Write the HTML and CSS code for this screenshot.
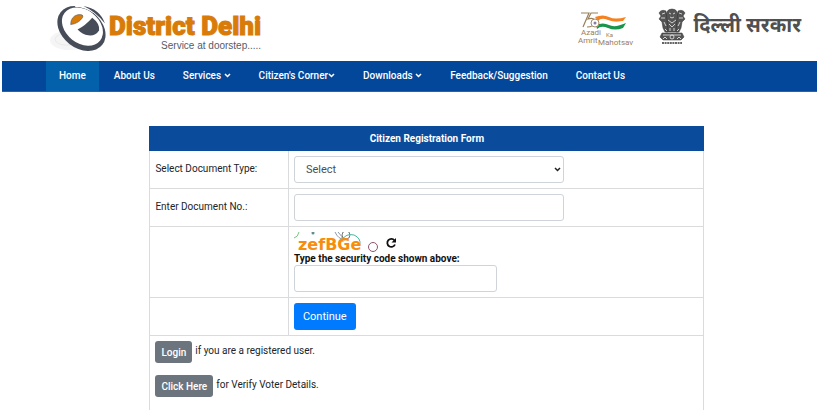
FILE: index.html
```html
<!DOCTYPE html>
<html lang="en">
<head>
<meta charset="utf-8">
<meta name="viewport" content="width=device-width, initial-scale=1">
<title>e-District Delhi - Citizen Registration Form</title>
<link rel="stylesheet" href="styles.css">
</head>
<body>
<header class="site-header">
  <div class="brand">
    <svg class="brand-mark" viewBox="0 0 60 50" aria-hidden="true">
      <ellipse cx="20" cy="37" rx="20" ry="10" fill="#f5f5f5"/>
      <ellipse cx="17" cy="36" rx="12" ry="6" fill="none" stroke="#e8e8e8"/>
      <ellipse cx="32" cy="25" rx="27" ry="20" transform="rotate(38 32 25)" fill="#464c58"/>
      <ellipse cx="33" cy="23" rx="23" ry="17" transform="rotate(38 33 23)" fill="#fff"/>
      <path d="M28 0Q39 0 47 8L44 9Q36 3 25 3Z" fill="#fff"/>
      <path d="M34 2Q51 5 56 20Q47 8 34 2Z" fill="#464c58"/>
      <path d="M28 26Q36 22 43 14Q51 20 50 27Q46 33 39 32Q33 31 28 26Z" fill="#464c58"/>
      <path d="M21 21Q21 13 28 11Q35 10 33 14Q29 20 21 21Z" fill="#d87b08" stroke="#555" stroke-width=".6"/>
    </svg>
    <div class="brand-text">
      <span class="brand-name">District Delhi</span>
      <span class="brand-tagline">Service at doorstep.....</span>
    </div>
  </div>
  <div class="partners">
    <svg class="azadi" viewBox="0 0 62 40" role="img" aria-label="75 Azadi Ka Amrit Mahotsav">
      <g transform="translate(0 3)">
        <g fill="none" stroke="#99805b" stroke-width="1.2">
          <path d="M3 2H11L5 16"/>
          <path d="M20 2H13L10 8Q17 6 17 11Q16 16 9 16"/>
        </g>
        <path d="M17 6Q25 3 31 6T48 6L45 10Q37 12 30 9T20 10Z" fill="#f58220"/>
        <path d="M20 10Q26 8 31 10T45 10L48 12Q39 16 31 13T20 14Z" fill="#fff"/>
        <path d="M18 14Q25 11 31 14T48 12L45 17Q37 20 30 17T19 18Z" fill="#16954b"/>
        <circle cx="17" cy="12" r="4" fill="#fff" stroke="#a48b69"/>
        <circle cx="17" cy="12" r="1.5" fill="#8b7da0"/>
      </g>
      <g class="azadi-text">
        <text x="3" y="27">Azadi</text>
        <text class="azadi-small" x="28" y="29">Ka</text>
        <text x="0" y="35">Amrit</text>
        <text x="20" y="37">Mahotsav</text>
      </g>
    </svg>
    <svg class="emblem" viewBox="0 0 28 38" aria-hidden="true">
      <g fill="#555" stroke="#333" stroke-width=".5">
        <path d="M9 4Q10 1 14 1Q18 1 19 4L21 8L19 13L20 24H8L9 13L7 8Z"/>
        <path d="M8 3Q3 1 1 5L3 8L1 11L4 14L5 20L7 24H10L9 12Z"/>
        <path d="M20 3Q25 1 27 5L25 8L27 11L24 14L23 20L21 24H18L19 12Z"/>
        <path d="M4 25H24L26 29L23 32H5L2 29Z"/>
      </g>
      <g fill="none" stroke="#eee" stroke-width=".8">
        <path d="M11 5L13 6M15 6L17 5M12 9Q14 11 16 9M10 12L14 15L18 12M11 16L14 19L17 16M12 20V23M16 20V23M4 6L7 5M3 10L7 10M6 14L8 18M24 6L21 5M25 10L21 10M22 14L20 18M7 21L9 23M21 21L19 23"/>
        <path d="M5 27H23"/>
        <circle cx="14" cy="29" r="2"/>
        <path d="M5 31L7 29L9 31M19 31L21 29L23 31"/>
      </g>
      <path d="M4 35H24" stroke="#333" stroke-width="1.5" stroke-dasharray="2 .6"/>
    </svg>
    <span class="government" lang="hi">दिल्ली सरकार</span>
  </div>
</header>

<nav class="main-nav" aria-label="Main">
  <a class="active" href="#">Home</a>
  <a href="#">About Us</a>
  <a href="#">Services <svg class="chevron" viewBox="0 0 7 5" aria-hidden="true"><path d="M1 1L3.500 3.500L6 1"/></svg></a>
  <a href="#">Citizen's Corner<svg class="chevron" viewBox="0 0 7 5" aria-hidden="true"><path d="M1 1L3.500 3.500L6 1"/></svg></a>
  <a href="#">Downloads <svg class="chevron" viewBox="0 0 7 5" aria-hidden="true"><path d="M1 1L3.500 3.500L6 1"/></svg></a>
  <a href="#">Feedback/Suggestion</a>
  <a href="#">Contact Us</a>
</nav>

<main>
  <form>
    <table class="registration">
      <thead>
        <tr><th colspan="2">Citizen Registration Form</th></tr>
      </thead>
      <tbody>
        <tr>
          <td class="label-cell"><label for="doc-type">Select Document Type:</label></td>
          <td>
            <div class="select-wrap">
              <select id="doc-type" class="control"><option>Select</option></select>
              <svg class="select-arrow" viewBox="0 0 7 5" aria-hidden="true"><path d="M1 1L3.500 3.500L6 1"/></svg>
            </div>
          </td>
        </tr>
        <tr>
          <td class="label-cell"><label for="doc-no">Enter Document No.:</label></td>
          <td><input id="doc-no" class="control" type="text"></td>
        </tr>
        <tr>
          <td></td>
          <td>
            <div class="captcha">
              <svg class="captcha-image" viewBox="0 0 86 21" role="img" aria-label="Security code">
                <g fill="none">
                  <path d="M0 6Q4 5 5 0" stroke="#7bc47f"/>
                  <path d="M41 0Q44 7 51 8M44 0Q49 4 49 10" stroke="#8a9aa8"/>
                  <ellipse cx="52" cy="3" rx="4" ry="4" stroke="#777"/>
                  <path d="M48 8Q52 1 60 3Q67 6 66 13" stroke="#45b8a4"/>
                </g>
                <circle cx="19" cy="1" r="1.5" fill="#638b91"/>
                <text class="captcha-code" x="4" y="18">zefBGe</text>
                <circle cx="79" cy="15" r="4.500" fill="none" stroke="#8c5570"/>
              </svg>
              <button class="refresh" type="button" aria-label="Refresh security code">
                <svg viewBox="0 0 12 12" aria-hidden="true"><path d="M9.500 3.500A4 4 0 1 0 10 7.500" fill="none" stroke="#111" stroke-width="1.800"/><path d="M11 1V5.500H6.500Z" fill="#111"/></svg>
              </button>
            </div>
            <label class="captcha-label" for="captcha">Type the security code shown above:</label>
            <input id="captcha" class="control control-short" type="text">
          </td>
        </tr>
        <tr>
          <td></td>
          <td><button class="btn-primary" type="submit">Continue</button></td>
        </tr>
        <tr>
          <td colspan="2">
            <div class="links">
              <p><button class="btn-secondary" type="button">Login</button> <span>if you are a registered user.</span></p>
              <p><button class="btn-secondary" type="button">Click Here</button> <span>for Verify Voter Details.</span></p>
            </div>
          </td>
        </tr>
      </tbody>
    </table>
  </form>
</main>
</body>
</html>
```
FILE: styles.css
```css
* {
  box-sizing: border-box;
}

body {
  margin: 0;
  background: #fff;
  color: #212529;
  font: 10px/15px Roboto, "Liberation Sans", sans-serif;
}

.site-header {
  display: flex;
  justify-content: space-between;
  align-items: flex-start;
  min-height: 61px;
  padding: 4px 18px 0 50px;
}

.brand,
.partners {
  display: flex;
}

.brand-mark {
  width: 59px;
  height: 49px;
}

.brand-text {
  display: flex;
  flex-direction: column;
  padding-top: 8px;
}

.brand-name {
  color: #d87b08;
  font: 900 26px/28px Roboto, sans-serif;
  -webkit-text-stroke: 1px #d87b08;
}

.brand-tagline {
  align-self: flex-end;
  color: #565b68;
  font: 10px/12px "Liberation Sans", Arial, sans-serif;
}

.partners {
  padding-top: 4px;
}

.azadi {
  width: 62px;
  height: 40px;
  margin-right: 18px;
}

.azadi-text {
  fill: #99805b;
  font: 8px Roboto, sans-serif;
}

.azadi-small {
  font-size: 6px;
}

.emblem {
  width: 28px;
  height: 38px;
  margin-right: 7px;
}

.government {
  color: #505050;
  font: bold 20px/38px "Noto Sans Devanagari", "Noto Sans", sans-serif;
}

.main-nav {
  display: flex;
  gap: 2px;
  margin: 0 2px;
  padding-left: 44px;
  background: #03479a;
  border-bottom: 1px solid #2d62a5;
}

.main-nav a {
  padding: 0 13px;
  color: #fff;
  font-weight: 500;
  line-height: 30px;
  text-decoration: none;
  white-space: nowrap;
}

.main-nav .active {
  background: #0361ab;
}

.chevron,
.select-arrow {
  width: 7px;
  height: 5px;
  fill: none;
  stroke: currentColor;
  stroke-width: 1.5;
}

.chevron {
  vertical-align: 1px;
}

main {
  padding: 34px 14% 0 calc(18% + 2px);
}

.registration {
  width: 100%;
  border-collapse: collapse;
}

.registration th,
.registration td {
  padding: 5px;
  border: 1px solid #d9dbdd;
}

.registration th {
  border-color: #0a4b9b;
  background: #0a4b9b;
  color: #fff;
  line-height: 13px;
}

.registration td {
  vertical-align: top;
}

.registration .label-cell {
  width: 25%;
  padding-top: 10px;
}

.select-wrap {
  position: relative;
  max-width: 270px;
}

.control {
  display: block;
  width: 100%;
  max-width: 270px;
  height: 27px;
  padding: 0 11px;
  border: 1px solid #ced4da;
  border-radius: 3px;
  background: #fff;
  color: #495057;
  font: 11px Roboto, sans-serif;
}

select.control {
  appearance: none;
}

.select-arrow {
  position: absolute;
  right: 3px;
  top: 11px;
  color: #222;
  pointer-events: none;
}

.control-short {
  max-width: 203px;
}

.captcha {
  display: flex;
  gap: 5px;
}

.captcha-image {
  width: 86px;
  height: 21px;
}

.captcha-code {
  fill: #f68d0b;
  font: bold 16px "DejaVu Sans", sans-serif;
}

.refresh {
  width: 12px;
  height: 12px;
  margin-top: 5px;
  padding: 0;
  border: 0;
  background: none;
}

.refresh svg {
  display: block;
}

.captcha-label {
  display: block;
  color: #111;
  font-weight: bold;
  line-height: 12px;
}

.btn-primary,
.btn-secondary {
  border: 0;
  border-radius: 3px;
  color: #fff;
  font-family: inherit;
}

.btn-primary {
  display: block;
  height: 27px;
  padding: 0 9px;
  background: #007bff;
  font-size: 11px;
}

.btn-secondary {
  height: 22px;
  padding: 0 6px;
  background: #6c757d;
  font-size: 10px;
  font-weight: 500;
}

.links {
  display: grid;
  gap: 12px;
  padding-bottom: 12px;
}

.links p {
  display: flex;
  gap: 3px;
  margin: 0;
  line-height: 20px;
}
```
